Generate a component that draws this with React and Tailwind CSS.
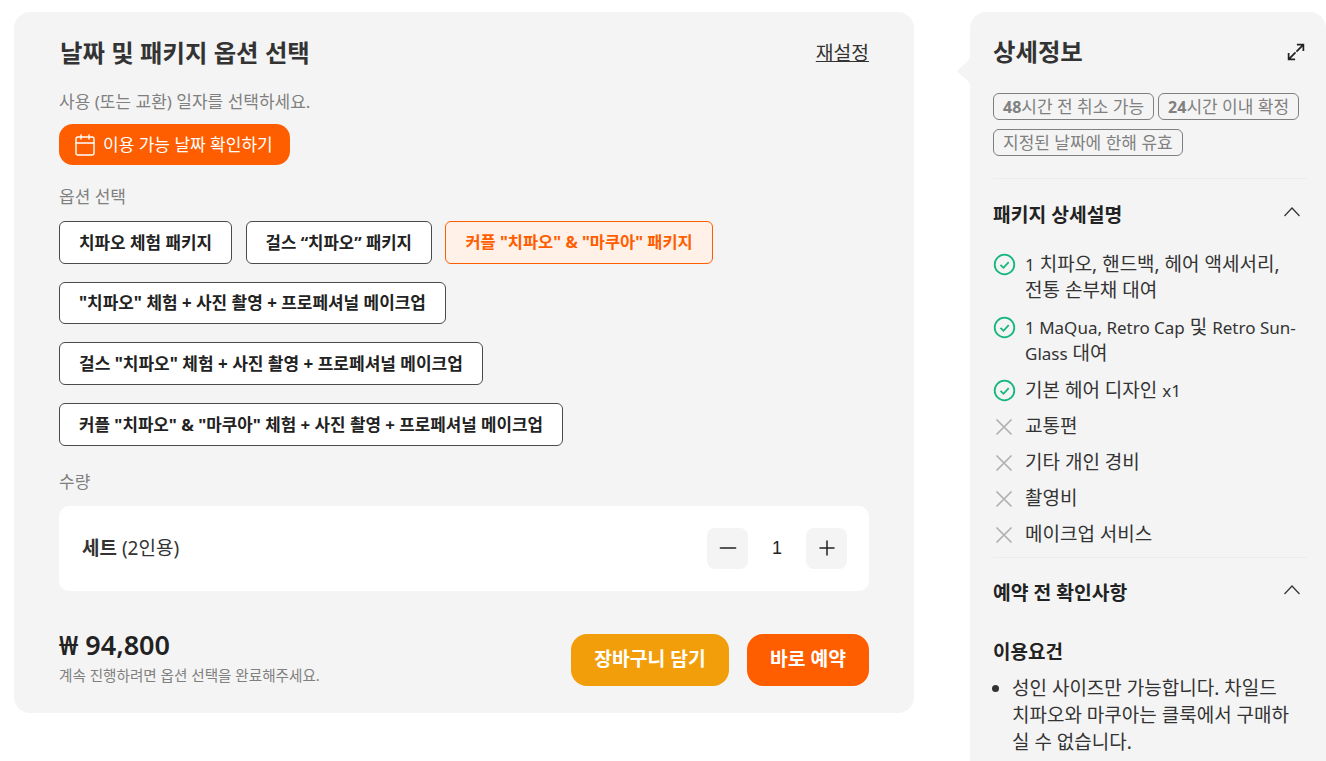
import React from "react";
import { Calendar, Minus, Plus } from "lucide-react";

function Opt({ children, active, size = "text-[16.9px]" }) {
  return (
    <button className={`h-[42.67px] px-[19px] rounded-[6px] border font-bold whitespace-nowrap ${size} ${active ? "border-[#ff5e00] bg-[#fff1e8] text-[#ff5e00]" : "border-[#4a4a4a] bg-white text-[#222]"}`}>
      {children}
    </button>
  );
}

function Tag({ children }) {
  return (
    <span className="h-[27px] px-[9px] flex items-center rounded-[6px] border border-[#808080] text-[17px] leading-none text-[#808080] whitespace-nowrap">
      {children}
    </span>
  );
}

function L({ children }) {
  return <span className="text-[17px] leading-none">{children}</span>;
}

function Chevron() {
  return (
    <svg className="w-[18px] h-[11px] mr-[6px] mb-[8px]" viewBox="0 0 18 11" fill="none" stroke="#333" strokeWidth="1.2">
      <path d="M1.5 10 9 2l7.5 8" />
    </svg>
  );
}

function Yes({ children, extra = "" }) {
  return (
    <li className={`flex gap-[9px] text-[#333] text-[19px] leading-[26px] ${extra}`}>
      <svg className="w-[23px] h-[23px] mt-[2px] shrink-0" viewBox="0 0 23 23" fill="none" stroke="#16b77c" strokeWidth="1.8">
        <circle cx="11.5" cy="11.5" r="9.8" />
        <path d="M7.5 11.8l3 3 5.2-5.6" />
      </svg>
      <span>{children}</span>
    </li>
  );
}
function No({ children }) {
  return (
    <li className="flex gap-[9px] text-[#333] text-[19px] leading-[26px]">
      <svg className="w-[23px] h-[23px] mt-[2px] shrink-0" viewBox="0 0 23 23" fill="none" stroke="#b0b0b0" strokeWidth="1.7">
        <path d="M3.5 4.5l15 15M18.5 4.5l-15 15" />
      </svg>
      <span>{children}</span>
    </li>
  );
}

export default function App() {
  return (
    <div className="w-[1326px] h-[761px] overflow-hidden bg-white flex items-start pt-[12px] pl-[14px] font-['Noto_Sans','Noto_Sans_CJK_KR',sans-serif]">
      <div className="w-[900px] h-[701px] shrink-0 rounded-[16px] bg-[#f4f4f4] px-[45px] pt-[24px]">
        <div className="flex items-center justify-between h-[34px]">
          <h2 className="text-[24.4px] font-bold text-[#333] pl-[1px]">날짜 및 패키지 옵션 선택</h2>
          <a className="text-[19.3px] text-[#333] underline">재설정</a>
        </div>
        <p className="mt-[21px] text-[17px] leading-[22px] text-[#808080]">사용 (또는 교환) 일자를 선택하세요.</p>
        <button className="mt-[11px] h-[41px] w-[231px] rounded-[14px] bg-[#ff5e00] text-white text-[17px] flex items-center justify-start pl-[14px] gap-[6px]">
          <Calendar className="w-[24px] h-[24px]" strokeWidth={1.4} />
          이용 가능 날짜 확인하기
        </button>
        <p className="mt-[21px] text-[17px] leading-[22px] text-[#808080]">옵션 선택</p>
        <div className="mt-[13px] flex gap-[13.5px]">
          <Opt>치파오 체험 패키지</Opt>
          <Opt size="text-[16.7px]">걸스 “치파오” 패키지</Opt>
          <Opt active size="text-[16.45px]">커플 "치파오" &amp; "마쿠아" 패키지</Opt>
        </div>
        <div className="mt-[18px] flex flex-col items-start gap-[18px]">
          <Opt size="text-[16.95px]">"치파오" 체험 + 사진 촬영 + 프로페셔널 메이크업</Opt>
          <Opt size="text-[17px]">걸스 "치파오" 체험 + 사진 촬영 + 프로페셔널 메이크업</Opt>
          <Opt size="text-[16.83px]">커플 "치파오" &amp; "마쿠아" 체험 + 사진 촬영 + 프로페셔널 메이크업</Opt>
        </div>
        <p className="mt-[25px] text-[17px] leading-[22px] text-[#808080]">수량</p>
        <div className="mt-[13px] h-[85px] rounded-[10px] bg-white pl-[23px] pr-[22px] flex items-center justify-between">
          <span className="text-[19px] text-[#333]"><b>세트</b> (2인용)</span>
          <div className="flex items-center">
            <span className="w-[41px] h-[41px] rounded-[8px] bg-[#f4f4f4] flex items-center justify-center text-[#222]"><Minus className="w-[26px] h-[26px]" strokeWidth={1.5} /></span>
            <span className="w-[58px] text-center text-[18px] text-[#222] font-['Liberation_Sans',sans-serif]">1</span>
            <span className="w-[41px] h-[41px] rounded-[8px] bg-[#f4f4f4] flex items-center justify-center text-[#222]"><Plus className="w-[24px] h-[24px]" strokeWidth={1.5} /></span>
          </div>
        </div>
        <div className="mt-[43px] flex items-start justify-between">
          <div>
            <div className="text-[27px] leading-[22px] font-semibold text-[#222]">₩ 94,800</div>
            <div className="mt-[9px] text-[14.6px] leading-[20px] text-[#808080]">계속 진행하려면 옵션 선택을 완료해주세요.</div>
          </div>
          <div className="flex gap-[18px]">
            <button className="w-[158px] h-[52px] rounded-[16px] bg-[#f29e0a] text-white text-[19.3px] font-bold">장바구니 담기</button>
            <button className="w-[122px] h-[52px] rounded-[16px] bg-[#ff5e00] text-white text-[19.3px] font-bold">바로 예약</button>
          </div>
        </div>
      </div>

      <div className="relative ml-[56px] w-[356px] h-[900px] shrink-0 rounded-[16px] bg-[#f4f4f4] px-[23px] pt-[22px]">
        <svg className="absolute left-[-13px] top-[41px] w-[14px] h-[36px]" viewBox="0 0 14 36" fill="#f4f4f4">
          <path d="M14 0C13 8 9 10 1 16.5Q0 18 1 19.5C9 26 13 28 14 36Z" />
        </svg>
        <div className="flex items-center justify-between w-[314px] h-[36px]">
          <h3 className="text-[24.4px] font-semibold text-[#333]">상세정보</h3>
          <svg className="w-[18px] h-[18px] mr-[2px] text-[#222]" viewBox="0 0 20 20" fill="none" stroke="currentColor" strokeWidth="1.9">
            <path d="M10.5 9.5 18.2 1.8M11 1.8H18.2V9M9.5 10.5 1.8 18.2M1.8 11V18.2H9" />
          </svg>
        </div>
        <div className="mt-[23px] flex flex-wrap gap-x-[4px] gap-y-[9px] w-[314px]">
          <Tag><b className="font-bold text-[16px]">48</b>시간 전 취소 가능</Tag>
          <Tag><b className="font-bold text-[16px]">24</b>시간 이내 확정</Tag>
          <Tag>지정된 날짜에 한해 유효</Tag>
        </div>
        <div className="mt-[22px] w-[314px] border-t border-[#ececec]" />
        <div className="mt-[18px] flex items-center justify-between w-[314px] h-[36px]">
          <h4 className="text-[19.3px] font-bold text-[#222]">패키지 상세설명</h4>
          <Chevron />
        </div>
        <ul className="mt-[18px] w-[306px] flex flex-col gap-[10px]">
          <Yes extra="pb-[1px]"><L>1</L> 치파오, 핸드백, 헤어 액세서리, 전통 손부채 대여</Yes>
          <Yes extra="pb-[1px]"><L>1 MaQua, Retro Cap</L> 및 <L>Retro Sun-Glass</L> 대여</Yes>
          <Yes>기본 헤어 디자인 <L>x1</L></Yes>
          <No>교통편</No>
          <No>기타 개인 경비</No>
          <No>촬영비</No>
          <No>메이크업 서비스</No>
        </ul>
        <div className="mt-[10px] w-[314px] border-t border-[#ececec]" />
        <div className="mt-[17px] flex items-center justify-between w-[314px] h-[36px]">
          <h4 className="text-[19.3px] font-bold text-[#222]">예약 전 확인사항</h4>
          <Chevron />
        </div>
        <h5 className="mt-[28px] text-[19px] leading-[26px] font-bold text-[#222]">이용요건</h5>
        <ul className="mt-[10px] w-[303px] pl-[19px] list-disc text-[19px] leading-[27px] text-[#333]">
          <li>성인 사이즈만 가능합니다. 차일드 치파오와 마쿠아는 클룩에서 구매하실 수 없습니다.</li>
        </ul>
      </div>
    </div>
  );
}
